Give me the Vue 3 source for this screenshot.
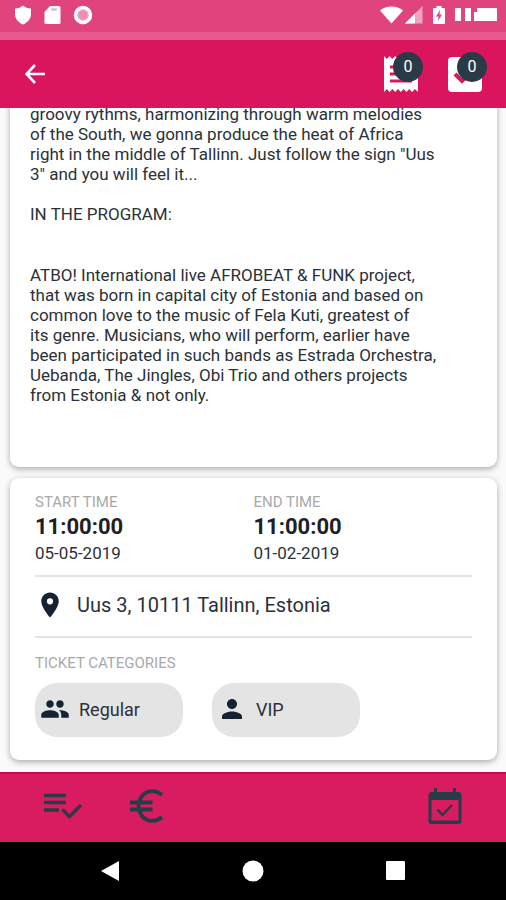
<script setup>
import { ref } from 'vue'

const intro = `groovy rythms, harmonizing through warm melodies
of the South, we gonna produce the heat of Africa
right in the middle of Tallinn. Just follow the sign "Uus
3" and you will feel it...`

const program = `ATBO! International live AFROBEAT & FUNK project,
that was born in capital city of Estonia and based on
common love to the music of Fela Kuti, greatest of
its genre. Musicians, who will perform, earlier have
been participated in such bands as Estrada Orchestra,
Uebanda, The Jingles, Obi Trio and others projects
from Estonia & not only.`

const times = [
  { label: 'START TIME', time: '11:00:00', date: '05-05-2019' },
  { label: 'END TIME', time: '11:00:00', date: '01-02-2019' },
]

const categories = [
  {
    name: 'Regular',
    icon: 'M16 11c1.66 0 2.99-1.34 2.99-3S17.66 5 16 5s-3 1.34-3 3 1.34 3 3 3zm-8 0c1.66 0 2.99-1.34 2.99-3S9.66 5 8 5 5 6.340 5 8s1.34 3 3 3zm0 2c-2.330 0-7 1.170-7 3.500V19h14v-2.500c0-2.330-4.670-3.500-7-3.500zm8 0c-.29 0-.62.02-.97.050 1.160.84 1.970 1.970 1.970 3.450V19h6v-2.500c0-2.330-4.670-3.500-7-3.500z',
  },
  {
    name: 'VIP',
    icon: 'M12 12c2.21 0 4-1.79 4-4s-1.79-4-4-4-4 1.79-4 4 1.79 4 4 4zm0 2c-2.67 0-8 1.34-8 4v2h16v-2c0-2.660-5.330-4-8-4z',
  },
]

const tickets = ref(0)
const saved = ref(0)
</script>

<template>
  <div class="screen">
    <div class="status">
      <div class="status-left">
        <svg width="18" height="20" viewBox="0 0 18 20"><path d="M9 0.500C7 2.500 4 3.500 1 3.500V9c0 5 3.500 8.500 8 10.500C13.500 17.500 17 14 17 9V3.500C14 3.500 11 2.500 9 .5z" fill="#fff" /></svg>
        <svg width="17" height="20" viewBox="0 0 17 20"><path d="M6 1h9a1.500 1.500 0 0 1 1.500 1.500v15A1.500 1.500 0 0 1 15 19H2a1.500 1.500 0 0 1-1.500-1.500V7z" fill="#fff" /><path d="M7 4.500h6" stroke="#f0a3c0" stroke-width="2" /></svg>
        <svg width="20" height="20" viewBox="0 0 20 20"><circle cx="10" cy="10" r="7.500" fill="#f0a3c0" stroke="#fff" stroke-width="3.500" /><circle cx="10" cy="10" r="4" fill="#ec8fb3" /></svg>
      </div>
      <div class="status-right">
        <svg width="23" height="18" viewBox="0 0 23 18"><path d="M0 4.500C6-.8 17-.8 23 4.500L11.500 17.500z" fill="#fff" /></svg>
        <svg width="18" height="18" viewBox="0 0 18 18"><path d="M17.500 0v17.500H0z" fill="#f0a3c0" /><path d="M10 7.500v10H0z" fill="#fff" /></svg>
        <svg class="battery" width="12" height="20" viewBox="0 0 12 20"><path d="M3.500 1h5v2H11a1 1 0 0 1 1 1v14a1 1 0 0 1-1 1H1a1 1 0 0 1-1-1V4a1 1 0 0 1 1-1h2.500z" fill="#fff" /><path d="M7 5L3 11.500h2.500L5 16l4-6.500H6.500z" fill="#e2457f" /></svg>
        <svg class="clock" width="43" height="16" viewBox="0 0 43 16"><path d="M0 1h6v13H0zM10 1h6v13h-6zM19 5h3V1h20v13H19z" fill="#fff" /></svg>
      </div>
    </div>

    <header class="bar">
      <button class="icon-btn" aria-label="Back">
        <svg width="20" height="20" viewBox="0 0 20 20"><path d="M20 10H2M10 1L1.500 10 10 19" fill="none" stroke="#fff" stroke-width="2.600" /></svg>
      </button>
      <div class="actions">
        <button class="icon-btn counter" aria-label="Tickets">
          <svg width="36" height="38" viewBox="0 0 36 38"><path d="M1 1l2.800 3 2.800-3 2.800 3 2.800-3L15 4l2.800-3 2.900 3 2.800-3 2.800 3 2.800-3L32 4l3-3v36l-3-3-2.900 3-2.800-3-2.800 3-2.800-3-2.900 3-2.800-3-2.800 3-2.800-3-2.800 3-2.800-3L1 37z" fill="#fff" /><path d="M7 12h22M7 19h22M7 26h22" stroke="#d9175f" stroke-width="3" /></svg>
          <span class="badge">{{ tickets }}</span>
        </button>
        <button class="icon-btn counter" aria-label="Saved events">
          <svg width="36" height="38" viewBox="0 0 36 38"><rect x="1" y="2" width="34" height="35" rx="4" fill="#fff" /><path d="M8 19l7 7 14-14" fill="none" stroke="#d9175f" stroke-width="4" /></svg>
          <span class="badge">{{ saved }}</span>
        </button>
      </div>
    </header>

    <main class="content">
      <section class="card about">
        <p>{{ intro }}</p>
        <p>IN THE PROGRAM:</p>
        <p class="program">{{ program }}</p>
      </section>

      <section class="card details">
        <div class="times">
          <div v-for="t in times" :key="t.label">
            <div class="label">{{ t.label }}</div>
            <div class="time">{{ t.time }}</div>
            <div class="date">{{ t.date }}</div>
          </div>
        </div>
        <div class="address">
          <svg width="30" height="30" viewBox="0 0 24 24"><path d="M12 2C8.130 2 5 5.130 5 9c0 5.250 7 13 7 13s7-7.750 7-13c0-3.870-3.130-7-7-7zm0 9.500a2.500 2.500 0 1 1 0-5 2.500 2.500 0 0 1 0 5z" fill="#142232" /></svg>
          <span>Uus 3, 10111 Tallinn, Estonia</span>
        </div>
        <div class="label">TICKET CATEGORIES</div>
        <div class="chips">
          <button v-for="c in categories" :key="c.name" class="chip">
            <svg width="30" height="30" viewBox="0 0 24 24"><path :d="c.icon" fill="#142232" /></svg>
            <span>{{ c.name }}</span>
          </button>
        </div>
      </section>
    </main>

    <nav class="tabs">
      <button class="icon-btn" aria-label="Program">
        <svg width="40" height="28" viewBox="0 0 40 28"><path d="M1 3.500h22M1 10.500h22M1 18h15M19.500 17.500l7 7L38 13" fill="none" stroke="#263c49" stroke-width="3.400" /></svg>
      </button>
      <button class="icon-btn" aria-label="Prices">
        <svg width="34" height="34" viewBox="0 0 34 34"><path d="M32 6C24-1 10 1 8.500 17 10 33 24 35 32 28M0 13.500h22.500M0 20.500h22.500" fill="none" stroke="#263c49" stroke-width="3.800" /></svg>
      </button>
      <button class="icon-btn calendar" aria-label="Add to calendar">
        <svg width="34" height="38" viewBox="0 0 34 38"><path d="M6 1h3v4h16V1h3v4h2.500A3 3 0 0 1 33.500 8v26a3 3 0 0 1-3 3h-27a3 3 0 0 1-3-3V8a3 3 0 0 1 3-3H6zM3.500 13v20.500h27V13z" fill="#263c49" fill-rule="evenodd" /><path d="M9.500 22.500l5 5.500L24 18" fill="none" stroke="#263c49" stroke-width="2.400" /></svg>
      </button>
    </nav>

    <div class="system">
      <button class="icon-btn" aria-label="System back"><svg width="22" height="22" viewBox="0 0 22 22"><path d="M19 1v20L1 11z" fill="#fff" /></svg></button>
      <button class="icon-btn" aria-label="Home"><svg width="22" height="22" viewBox="0 0 22 22"><circle cx="11" cy="11" r="10.500" fill="#fff" /></svg></button>
      <button class="icon-btn" aria-label="Overview"><svg width="22" height="22" viewBox="0 0 22 22"><rect x="2" y="1" width="19" height="19" rx="1" fill="#fff" /></svg></button>
    </div>
  </div>
</template>

<style>
body {
  background: #fafafa;
}
</style>

<style scoped>
.screen {
  display: flex;
  flex-direction: column;
  height: 100vh;
  font-family: Roboto, "Liberation Sans", sans-serif;
  color: #2b3138;
  background: #fafafa;
}
svg {
  display: block;
  flex: none;
}
.icon-btn {
  display: block;
  padding: 0;
  border: 0;
  background: none;
}
.status {
  box-sizing: border-box;
  flex: none;
  height: 40px;
  padding: 0 8px 2px 14px;
  display: flex;
  justify-content: space-between;
  background: #e1447d;
  border-bottom: 8px solid #e55b8d;
}
.status-left,
.status-right {
  display: flex;
  align-items: center;
}
.status-left {
  gap: 12px;
}
.status-right {
  gap: 2px;
}
.battery {
  margin-left: 8px;
}
.clock {
  margin-left: 8px;
}
.bar {
  box-sizing: border-box;
  flex: none;
  height: 68px;
  padding: 0 23px 0 25px;
  display: flex;
  align-items: center;
  justify-content: space-between;
  background: #db155d;
}
.actions {
  display: flex;
  gap: 28px;
}
.counter {
  position: relative;
}
.badge {
  position: absolute;
  top: -3px;
  right: -4px;
  width: 30px;
  height: 30px;
  border-radius: 50%;
  background: #2b3a47;
  color: #fff;
  font-family: Roboto, sans-serif;
  font-size: 16px;
  line-height: 30px;
  text-align: center;
}
.content {
  flex: 1;
  min-height: 0;
  overflow: hidden;
  padding: 0 9px 12px 10px;
  display: flex;
  flex-direction: column;
  justify-content: flex-end;
  gap: 11px;
}
.card {
  flex: none;
  background: #fff;
  border-radius: 9px;
  box-shadow: 0 2px 6px rgba(0, 0, 0, 0.32);
}
.about {
  padding: 20px 20px 62px;
  font-size: 17px;
  line-height: 20px;
}
.about p {
  margin: 0 0 20px;
  white-space: pre-line;
}
.about .program {
  margin: 41px 0 0;
}
.details {
  padding: 14px 25px 23px;
}
.times {
  display: grid;
  grid-template-columns: 1fr 1fr;
  padding-bottom: 11px;
  border-bottom: 2px solid #e4e4e4;
}
.label {
  font-size: 15px;
  line-height: 20px;
  color: #a9a9a9;
}
.time {
  font-size: 22px;
  line-height: 30px;
  font-weight: 700;
  color: #1d2125;
}
.date {
  font-size: 17px;
  line-height: 22px;
}
.address {
  box-sizing: border-box;
  display: flex;
  align-items: center;
  gap: 12px;
  height: 61px;
  padding-bottom: 3px;
  margin-bottom: 15px;
  border-bottom: 2px solid #e4e4e4;
  font-size: 20px;
}
.chips {
  display: flex;
  gap: 29px;
  margin-top: 10px;
}
.chip {
  display: flex;
  align-items: center;
  gap: 9px;
  width: 148px;
  height: 54px;
  padding: 0 5px 2px;
  border: 0;
  border-radius: 22px;
  background: #e4e4e4;
  font-family: inherit;
  font-size: 18px;
  color: inherit;
}
.tabs {
  box-sizing: border-box;
  flex: none;
  height: 70px;
  padding: 0 44px 4px 43px;
  display: flex;
  align-items: center;
  gap: 47px;
  background: #d91b5f;
  border-top: 2px solid #cf0552;
}
.calendar {
  margin-left: auto;
}
.system {
  flex: none;
  height: 58px;
  display: flex;
  align-items: center;
  justify-content: center;
  gap: 120px;
  background: #000;
}
</style>
